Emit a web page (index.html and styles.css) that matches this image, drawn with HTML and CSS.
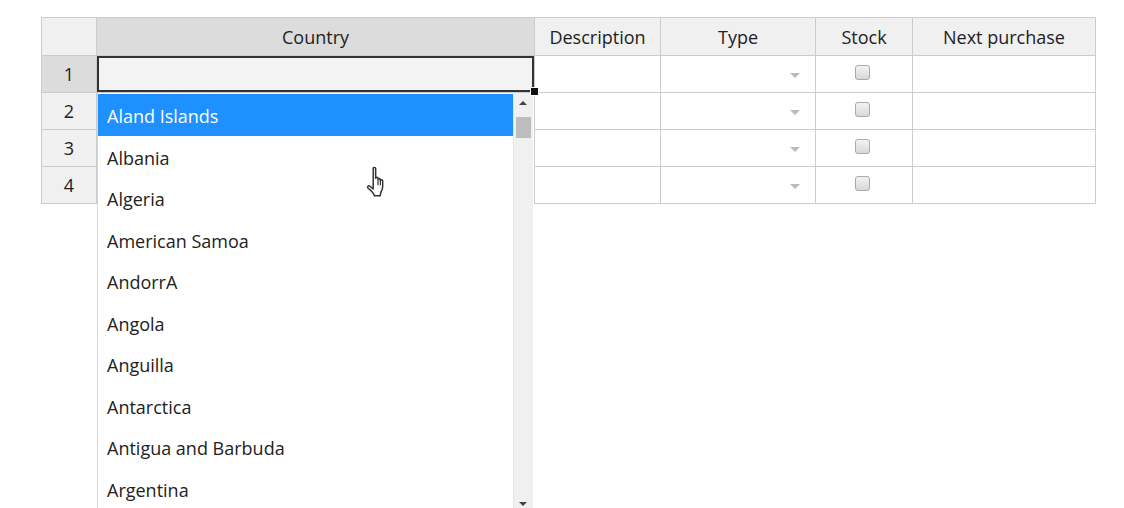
FILE: index.html
```html
<!DOCTYPE html>
<html>
<head>
<meta charset="utf-8">
<link rel="stylesheet" href="styles.css">
</head>
<body>
<div class="wrap">
  <table class="grid">
    <colgroup>
      <col class="c-rh"><col class="c-country"><col class="c-desc"><col class="c-type"><col class="c-stock"><col class="c-next">
    </colgroup>
    <thead>
      <tr>
        <th class="corner"></th>
        <th class="hl">Country</th>
        <th>Description</th>
        <th>Type</th>
        <th>Stock</th>
        <th>Next purchase</th>
      </tr>
    </thead>
    <tbody>
      <tr>
        <th class="rh hl">1</th>
        <td class="sel"><span class="handle"></span></td>
        <td></td>
        <td class="drop"><span class="arrow"></span></td>
        <td class="chk"><span class="box"></span></td>
        <td></td>
      </tr>
      <tr>
        <th class="rh">2</th>
        <td></td>
        <td></td>
        <td class="drop"><span class="arrow"></span></td>
        <td class="chk"><span class="box"></span></td>
        <td></td>
      </tr>
      <tr>
        <th class="rh">3</th>
        <td></td>
        <td></td>
        <td class="drop"><span class="arrow"></span></td>
        <td class="chk"><span class="box"></span></td>
        <td></td>
      </tr>
      <tr>
        <th class="rh">4</th>
        <td></td>
        <td></td>
        <td class="drop"><span class="arrow"></span></td>
        <td class="chk"><span class="box"></span></td>
        <td></td>
      </tr>
    </tbody>
  </table>

  <div class="list">
    <ul class="items">
      <li class="active">Aland Islands</li>
      <li>Albania</li>
      <li>Algeria</li>
      <li>American Samoa</li>
      <li>AndorrA</li>
      <li>Angola</li>
      <li>Anguilla</li>
      <li>Antarctica</li>
      <li>Antigua and Barbuda</li>
      <li>Argentina</li>
    </ul>
    <div class="scroll">
      <span class="up"></span>
      <span class="thumb"></span>
      <span class="down"></span>
    </div>
  </div>

  <svg class="cursor" width="24" height="34" viewBox="0 0 22 32">
    <path d="M6.5 2.2c0-1.2 2.3-1.2 2.3 0v9.3c0-1.1 2.2-1.1 2.2 0v1.2c0-1.1 2.2-1.1 2.2 0v1.1c0-1.1 2.2-1.1 2.2 0v5.2c0 2.6-1 4.2-1.6 5.6-0.6 1.4-0.6 2.4-0.6 3.4H7.6c-0.3-1.4-1.4-2.8-3-4.6L1.5 20.7c-1-1.2 0.6-2.7 1.8-1.7l3.2 2.7z" fill="#fff" stroke="#333" stroke-width="1.4" stroke-linejoin="round"/>
    <path d="M11 13v5M13.2 13.8v4.2" stroke="#333" stroke-width="1.1" fill="none"/>
  </svg>
</div>
</body>
</html>
```

FILE: styles.css
```css
html, body {
  margin: 0;
  padding: 0;
  background: #fff;
}

body {
  font-family: "Open Sans", "Liberation Sans", sans-serif;
  font-size: 18px;
  color: #222;
}

.wrap {
  position: relative;
  width: 1124px;
  height: 508px;
  overflow: hidden;
  padding: 17px 0 0 41px;
  box-sizing: border-box;
}

.grid {
  border-collapse: collapse;
  table-layout: fixed;
  width: 1054px;
}

.c-rh { width: 55px; }
.c-country { width: 438px; }
.c-desc { width: 126px; }
.c-type { width: 155px; }
.c-stock { width: 97px; }
.c-next { width: 183px; }

.grid th,
.grid td {
  border: 1px solid #ccc;
  padding: 0;
  box-sizing: border-box;
}

.grid thead th {
  height: 38px;
  background: #f0f0f0;
  font-weight: 400;
  text-align: center;
  color: #222;
}

.grid tbody td,
.grid tbody th {
  height: 37px;
}

.grid tbody td {
  background: #fff;
  position: relative;
}

.grid th.rh {
  background: #f0f0f0;
  font-weight: 400;
  text-align: center;
  color: #222;
}

.grid th.hl {
  background: #dcdcdc;
}

.grid td.sel {
  background: #f3f3f3;
  box-shadow: inset 0 0 0 2px #333;
}

.handle {
  position: absolute;
  right: -5px;
  bottom: -4px;
  width: 7px;
  height: 7px;
  background: #111;
  border: 1px solid #fff;
  z-index: 3;
}

.arrow {
  position: absolute;
  right: 15px;
  top: 17px;
  width: 0;
  height: 0;
  border-left: 5px solid transparent;
  border-right: 5px solid transparent;
  border-top: 5px solid #bbb;
}

.box {
  position: absolute;
  left: 39px;
  top: 9px;
  width: 13px;
  height: 13px;
  border: 1px solid #aaa;
  border-radius: 3px;
  background: linear-gradient(#f3f3f3, #d8d8d8);
}

.list {
  position: absolute;
  left: 97px;
  top: 93px;
  width: 437px;
  height: 420px;
  display: flex;
  background: #fff;
  border-left: 1px solid #d6d6d6;
  box-sizing: border-box;
  z-index: 2;
}

.items {
  list-style: none;
  margin: 0;
  padding: 1px 0 0 0;
  flex: 1;
}

.items li {
  height: 41.45px;
  line-height: 44px;
  overflow: hidden;
  padding-left: 9px;
  color: #222;
  white-space: nowrap;
}

.items li.active {
  background: #1e90ff;
  color: #fff;
  height: 42px;
  line-height: 44px;
}

.scroll {
  width: 19px;
  background: #f0f0f0;
  border-left: 1px solid #e6e6e6;
  position: relative;
  margin-right: 1px;
}

.up {
  position: absolute;
  left: 5px;
  top: 8px;
  width: 0;
  height: 0;
  border-left: 4px solid transparent;
  border-right: 4px solid transparent;
  border-bottom: 4px solid #444;
}

.thumb {
  position: absolute;
  left: 2px;
  top: 24px;
  width: 15px;
  height: 21px;
  background: #bdbdbd;
}

.down {
  position: absolute;
  left: 5px;
  top: 409px;
  width: 0;
  height: 0;
  border-left: 4px solid transparent;
  border-right: 4px solid transparent;
  border-top: 4px solid #444;
}

.cursor {
  position: absolute;
  left: 366px;
  top: 166px;
  z-index: 5;
}
```
